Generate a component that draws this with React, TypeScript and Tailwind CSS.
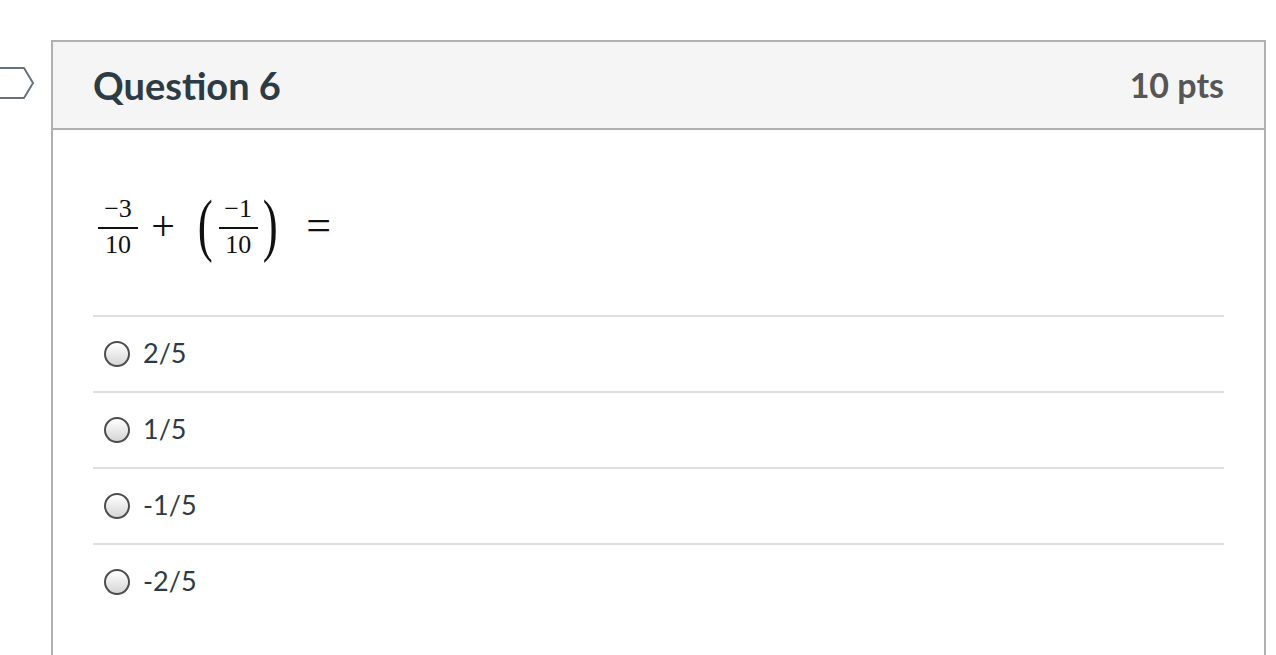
import React from "react";

const math = { fontFamily: '"Liberation Serif", "Times New Roman", serif' };

function Frac({ num, den, w }: { num: string; den: string; w: string }) {
  return (
    <div className={`flex flex-col items-center ${w}`} style={math}>
      <span className="text-[26px] leading-[26px] mb-[5px]">{num}</span>
      <div className="h-[1.5px] w-full bg-[#111]" />
      <span className="text-[26px] leading-[26px] mt-[3.5px]">{den}</span>
    </div>
  );
}

function Radio() {
  return (
    <div className="w-[26px] h-[26px] rounded-full border-2 border-[#4d4d4d] bg-gradient-to-b from-[#ffffff] to-[#d6d6d6] shrink-0" />
  );
}

const options = ["2/5", "1/5", "-1/5", "-2/5"];

export default function App() {
  return (
    <div className="min-h-[655px] bg-white pt-[40px] overflow-hidden" style={{ fontFamily: 'Lato, "Open Sans", sans-serif' }}>
      <div className="flex">
        <div className="w-[51px] shrink-0">
          <svg width="40" height="34" viewBox="0 0 40 34" className="mt-[26px] block" fill="none">
            <path d="M-3 2 H24 L33 17 L24 32 H-3" stroke="#66737d" strokeWidth="2" strokeLinejoin="round" />
          </svg>
        </div>
        <div className="flex-1 mr-[10px] border-2 border-[#b0b0b0] min-h-[640px]">
          <div className="h-[88px] bg-[#f5f5f5] border-b-2 border-[#b0b0b0] flex items-center justify-between px-10">
            <h2 className="text-[38px] font-bold text-[#2d3b45] leading-none">Question 6</h2>
            <span className="text-[34px] font-bold text-[#565656] leading-none">10 pts</span>
          </div>
          <div className="px-10 pb-10">
            <div className="h-[70px] mt-[62px] mb-[53px] flex items-center text-[#111]" style={math}>
              <Frac num="−3" den="10" w="w-[40px] ml-[5px]" />
              <span className="text-[42px] leading-none ml-[13px] w-[24px] text-center -translate-y-[1px]">+</span>
              <span className="text-[50px] leading-none ml-[22px] inline-block scale-y-[1.4] scale-x-[0.9] -translate-y-[3px]">(</span>
              <Frac num="−1" den="10" w="w-[39px] ml-[5px]" />
              <span className="text-[50px] leading-none ml-[4px] inline-block scale-y-[1.4] scale-x-[0.9] -translate-y-[3px]">)</span>
              <span className="text-[44px] leading-none ml-[28px] w-[24px] text-center -translate-y-[1px]">=</span>
            </div>
            {options.map((o) => (
              <div key={o} className="h-[76px] border-t-2 border-[#e0e0e0] flex items-center pl-[11px]">
                <Radio />
                <span className="ml-[13px] text-[27px] text-[#2d3b45] -translate-y-[1px]">{o}</span>
              </div>
            ))}
          </div>
        </div>
      </div>
    </div>
  );
}
